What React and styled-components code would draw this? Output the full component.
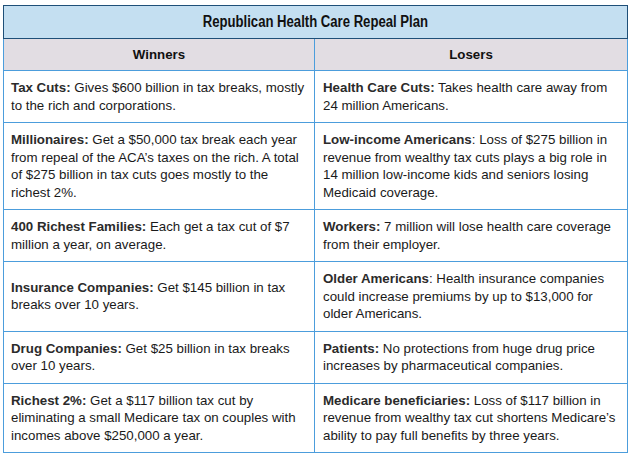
import React from "react";
import styled, { createGlobalStyle } from "styled-components";

const Global = createGlobalStyle`
  html, body { margin: 0; padding: 0; background: #ffffff; }
  body { font-family: "Liberation Sans", Arial, sans-serif; }
`;

const Page = styled.div`
  padding: 5px 0 0 3px;
`;

const Table = styled.table`
  width: 624px;
  border-collapse: collapse;
  table-layout: fixed;
  font-family: "Liberation Sans", Arial, sans-serif;
`;

const TitleCell = styled.th`
  height: 32px;
  padding: 0;
  background: #c4dff1;
  border: 1px solid #1e4f78;
  color: #111;
  font-weight: bold;
  font-size: 16px;
  text-align: center;
  vertical-align: middle;
`;

const NarrowText = styled.span`
  display: inline-block;
  transform: scaleX(0.82);
  transform-origin: center;
  font-family: "Liberation Sans Narrow", "Liberation Sans", Arial, sans-serif;
  white-space: nowrap;
`;

const HeadCell = styled.th`
  height: 31px;
  padding: 0;
  background: #e2dde3;
  border: 1px solid #4c9ddc;
  color: #111;
  font-weight: bold;
  font-size: 13.3px;
  text-align: center;
  vertical-align: middle;
`;

const Cell = styled.td`
  padding: ${(p) => (p.$right ? "8px 5px 8px 8px" : "8px 5px 8px 7px")};
  border: 1px solid #4c9ddc;
  font-size: 13.3px;
  line-height: 17.5px;
  color: #1a1a1a;
  vertical-align: middle;
`;

const Label = styled.b`
  color: #2b2b2b;
  font-weight: bold;
`;

const rows = [
  [
    ["Tax Cuts:", " Gives $600 billion in tax breaks, mostly to the rich and corporations."],
    ["Health Care Cuts:", " Takes health care away from 24 million Americans."],
  ],
  [
    ["Millionaires:", " Get a $50,000 tax break each year from repeal of the ACA\u2019s taxes on the rich. A total of $275 billion in tax cuts goes mostly to the richest 2%."],
    ["Low-income Americans", ": Loss of $275 billion in revenue from wealthy tax cuts plays a big role in 14 million low-income kids and seniors losing Medicaid coverage."],
  ],
  [
    ["400 Richest Families:", " Each get a tax cut of $7 million a year, on average."],
    ["Workers:", " 7 million will lose health care coverage from their employer."],
  ],
  [
    ["Insurance Companies:", " Get $145 billion in tax breaks over 10 years."],
    ["Older Americans", ": Health insurance companies could increase premiums by up to $13,000 for older Americans."],
  ],
  [
    ["Drug Companies:", " Get $25 billion in tax breaks over 10 years."],
    ["Patients:", " No protections from huge drug price increases by pharmaceutical companies."],
  ],
  [
    ["Richest 2%:", " Get a $117 billion tax cut by eliminating a small Medicare tax on couples with incomes above $250,000 a year."],
    ["Medicare beneficiaries:", " Loss of $117 billion in revenue from wealthy tax cut shortens Medicare\u2019s ability to pay full benefits by three years."],
  ],
];

export default function App() {
  return (
    <>
      <Global />
      <Page>
        <Table>
          <colgroup>
            <col style={{ width: "311px" }} />
            <col style={{ width: "313px" }} />
          </colgroup>
          <thead>
            <tr>
              <TitleCell colSpan={2}>
                <NarrowText>Republican Health Care Repeal Plan</NarrowText>
              </TitleCell>
            </tr>
            <tr>
              <HeadCell>Winners</HeadCell>
              <HeadCell>Losers</HeadCell>
            </tr>
          </thead>
          <tbody>
            {rows.map((r, i) => (
              <tr key={i}>
                <Cell>
                  <Label>{r[0][0]}</Label>
                  {r[0][1]}
                </Cell>
                <Cell $right>
                  <Label>{r[1][0]}</Label>
                  {r[1][1]}
                </Cell>
              </tr>
            ))}
          </tbody>
        </Table>
      </Page>
    </>
  );
}
